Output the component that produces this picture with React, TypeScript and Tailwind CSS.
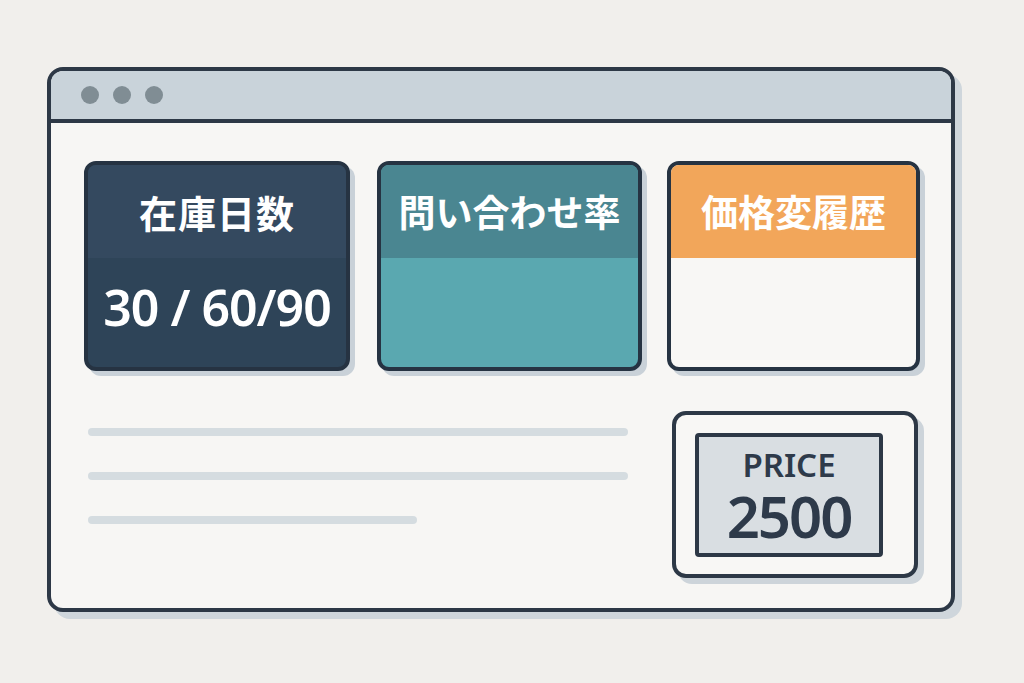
export default function App() {
  const jp = { fontFamily: '"Noto Sans CJK JP", "Noto Sans", sans-serif' }
  const num = { fontFamily: '"Noto Sans", "Open Sans", sans-serif' }

  return (
    <div className="w-[1024px] h-[683px] bg-[#f1efec] pt-[67px] pl-[47px]">
      {/* browser window */}
      <div className="w-[908px] h-[545px] rounded-[16px] border-[4px] border-[#2d3846] bg-[#f7f6f4] shadow-[7px_7px_0_#cfd6dc] overflow-hidden flex flex-col">
        <div className="h-[52px] shrink-0 bg-[#c9d3da] border-b-[4px] border-[#2d3846] flex items-center gap-[14px] pl-[30px]">
          <span className="w-[18px] h-[18px] rounded-full bg-[#808d94]" />
          <span className="w-[18px] h-[18px] rounded-full bg-[#808d94]" />
          <span className="w-[18px] h-[18px] rounded-full bg-[#808d94]" />
        </div>

        <div className="flex flex-col pt-[38px] pl-[33px]">
          {/* metric cards */}
          <div className="flex">
            <div className="w-[266px] h-[210px] rounded-[12px] border-[4px] border-[#263342] bg-[#2e4458] shadow-[5px_5px_0_#c9d1d8] overflow-hidden flex flex-col">
              <div className="h-[93px] bg-[#34495f] flex items-center justify-center">
                <span style={jp} className="text-[38px] leading-none font-bold text-white tracking-[1px]">在庫日数</span>
              </div>
              <div className="flex-1 flex items-center justify-center pb-3">
                <span style={num} className="text-[50px] leading-none font-semibold text-white tracking-[-1px]">30 / 60/90</span>
              </div>
            </div>

            <div className="ml-[27px] w-[265px] h-[210px] rounded-[12px] border-[4px] border-[#263342] bg-[#5aa8b0] shadow-[5px_5px_0_#c9d1d8] overflow-hidden flex flex-col">
              <div className="h-[93px] bg-[#4a8691] flex items-center justify-center">
                <span style={jp} className="text-[37px] leading-none font-bold text-white">問い合わせ率</span>
              </div>
            </div>

            <div className="ml-[25px] w-[253px] h-[210px] rounded-[12px] border-[4px] border-[#263342] bg-[#f8f7f5] shadow-[5px_5px_0_#c9d1d8] overflow-hidden flex flex-col">
              <div className="h-[93px] bg-[#f2a65a] flex items-center justify-center">
                <span style={jp} className="text-[37px] leading-none font-bold text-white">価格変履歴</span>
              </div>
            </div>
          </div>

          {/* text lines + price tag */}
          <div className="flex mt-[40px]">
            <div className="ml-[4px] w-[584px] pt-[17px] flex flex-col gap-[36px]">
              <div className="h-[8px] w-[540px] rounded-full bg-[#d5dce0]" />
              <div className="h-[8px] w-[540px] rounded-full bg-[#d5dce0]" />
              <div className="h-[8px] w-[329px] rounded-full bg-[#d5dce0]" />
            </div>

            <div className="w-[246px] h-[167px] rounded-[14px] border-[4px] border-[#2d3846] bg-[#f8f7f5] shadow-[6px_6px_0_#cdd4da] pt-[18px] pl-[19px]">
              <div className="w-[188px] h-[124px] rounded-[4px] border-[4px] border-[#2d3846] bg-[#d9dee2] flex flex-col items-center pt-[11px]">
                <span style={num} className="text-[33px] leading-[33px] h-[33px] font-semibold text-[#2e3a4a]">PRICE</span>
                <span style={num} className="mt-[6px] text-[58px] leading-[58px] font-semibold text-[#2e3a4a] tracking-[-2px]">2500</span>
              </div>
            </div>
          </div>
        </div>
      </div>
    </div>
  )
}
